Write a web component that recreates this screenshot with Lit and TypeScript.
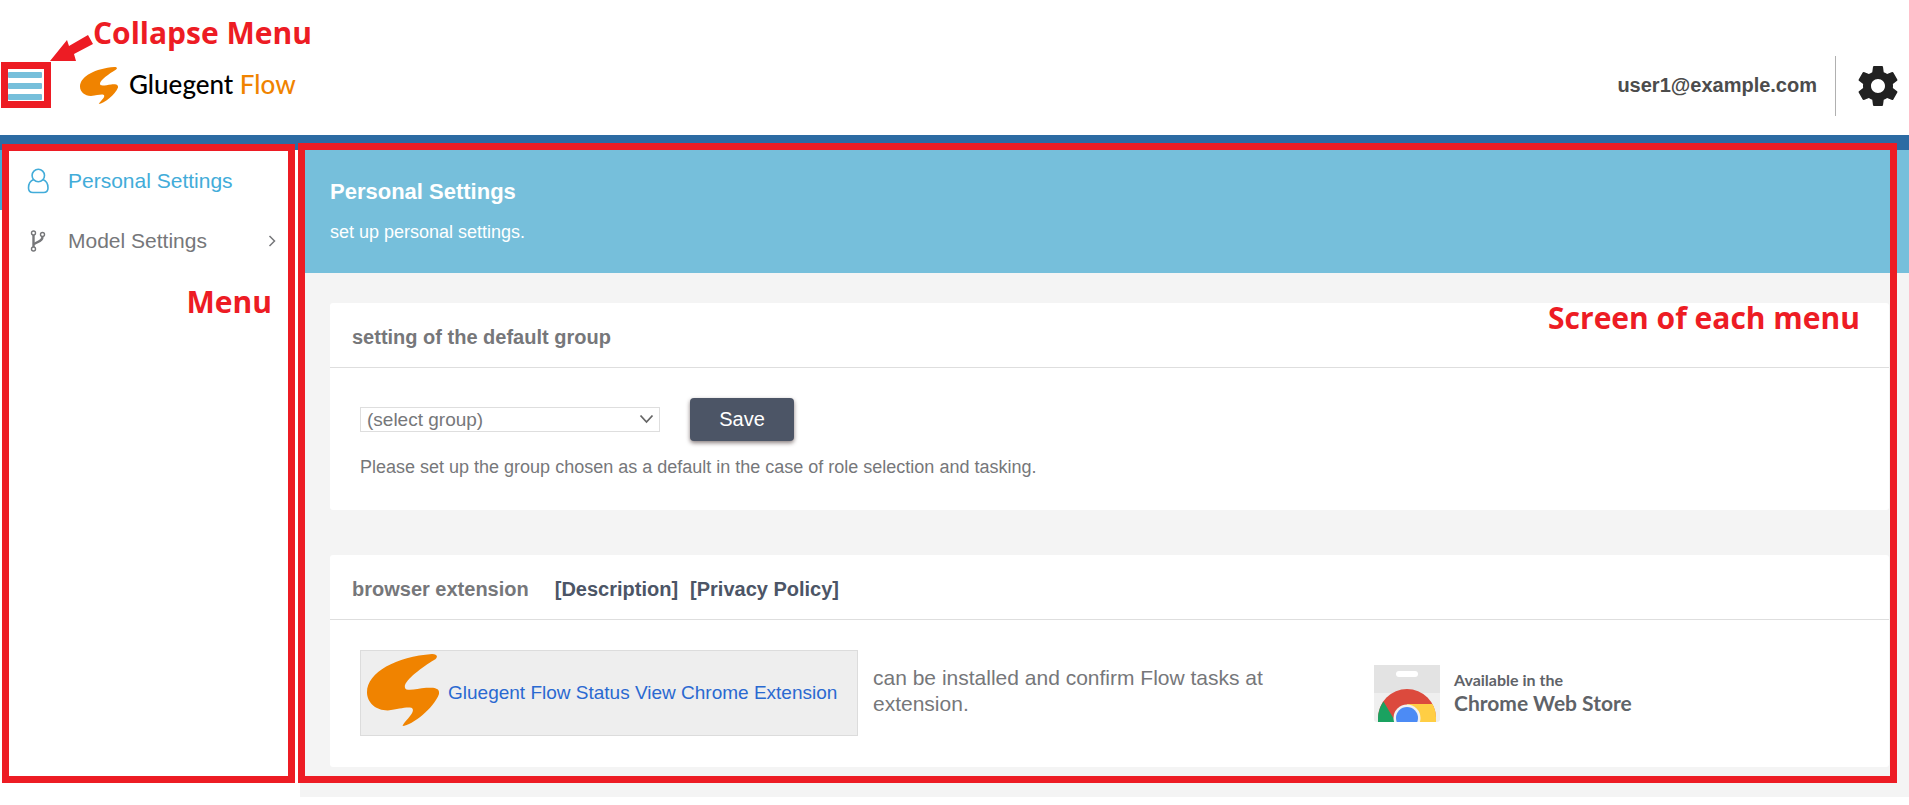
import { LitElement, html, css, svg } from "lit";
import { customElement, state } from "lit/decorators.js";

const SWOOSH =
  "M66 0C30 3 0 21 0 44C0 56 9 65 21 65C32 64 38 61 45 62C51 66 38 77 36 83C46 82 68 62 73 46C74 38 66 39 60 39C52 40 46 42 40 41C32 35 55 16 68 7C73 3 71 0 66 0Z";

@customElement("app-root")
export class AppRoot extends LitElement {
  @state() private collapsed = false;

  static styles = css`
    :host {
      display: block;
      font-family: "Liberation Sans", Arial, sans-serif;
      color: #76777a;
      background: #fff;
    }
    * {
      box-sizing: border-box;
    }
    a {
      text-decoration: none;
      color: inherit;
    }
    h1, h2, p, ul {
      margin: 0;
      padding: 0;
    }
    svg {
      display: block;
      flex: none;
    }
    button {
      font: inherit;
      border: 0;
      padding: 0;
      background: none;
      cursor: pointer;
    }

    .header {
      position: relative;
      display: flex;
      align-items: center;
      height: 150px;
      padding: 36px 7px 0 8px;
      border-bottom: 15px solid #2c6ba3;
    }
    .toggle {
      display: grid;
      gap: 5px;
      width: 34px;
    }
    .bar {
      height: 6px;
      border-radius: 1px;
      background: #76bfdb;
    }
    .brand {
      display: flex;
      align-items: center;
      gap: 11px;
      margin-left: 38px;
      font: 500 26px/32px Lato, "Open Sans", sans-serif;
      color: #000;
    }
    .brand-name {
      padding-bottom: 4px;
    }
    .brand-accent {
      color: #f08300;
    }
    .account {
      display: flex;
      align-items: center;
      margin-left: auto;
      font-size: 20px;
      font-weight: bold;
      color: #4c4c4c;
    }
    .user {
      padding-right: 18px;
    }
    .gear {
      border-left: 1px solid #b0b0b0;
      height: 60px;
      padding-left: 18px;
      color: #212121;
    }

    .page {
      display: grid;
      grid-template-columns: 300px minmax(0, 1fr);
    }
    .page.collapsed {
      grid-template-columns: 0 minmax(0, 1fr);
    }
    .menu {
      position: relative;
    }
    .collapsed .menu {
      visibility: hidden;
    }
    .menu ul {
      list-style: none;
    }
    .menu-link {
      display: grid;
      grid-template-columns: 24px 1fr auto;
      align-items: center;
      gap: 18px;
      height: 60px;
      padding: 1px 24px 0 24px;
      border-left: 2px solid transparent;
      font-size: 21px;
    }
    .menu-link.active {
      border-left-color: #42acd9;
      color: #42acd9;
    }

    .screen {
      position: relative;
      background: #f4f4f4;
      padding-bottom: 30px;
    }
    .hero {
      height: 123px;
      padding: 28px 30px;
      background: #76bfdb;
      color: #fff;
    }
    .hero h1 {
      font-size: 22px;
      line-height: 28px;
    }
    .hero p {
      margin-top: 12px;
      font-size: 18px;
      line-height: 28px;
    }
    .cards {
      display: grid;
      gap: 45px;
      padding: 30px 20px 0 30px;
    }
    .card {
      background: #fff;
      border-radius: 3px;
    }
    .card-head {
      display: flex;
      align-items: center;
      gap: 12px;
      height: 65px;
      padding: 4px 22px 0;
      border-bottom: 1px solid #dedede;
      font-size: 20px;
      font-weight: bold;
    }
    .card-head h2 {
      font-size: 20px;
      margin-right: 14px;
    }
    .card-head a {
      color: #4c5566;
    }
    .card-body {
      padding: 30px 30px 31px;
    }
    .form-row {
      display: flex;
      align-items: center;
      gap: 30px;
    }
    .select-box {
      position: relative;
      width: 300px;
    }
    .select-box select {
      display: block;
      appearance: none;
      width: 100%;
      height: 25px;
      padding: 0 24px 0 6px;
      border: 1px solid #dedede;
      border-radius: 0;
      background: #fff;
      color: #76777a;
      font: 19px/23px "Liberation Sans", Arial, sans-serif;
    }
    .select-arrow {
      position: absolute;
      right: 6px;
      top: 6px;
      pointer-events: none;
    }
    .save {
      width: 104px;
      height: 43px;
      border-radius: 4px;
      background: #4c5566;
      color: #fff;
      font-size: 20px;
      box-shadow: 0 2px 4px rgba(40, 20, 20, 0.55);
    }
    .hint {
      margin-top: 14px;
      font-size: 18px;
      line-height: 24px;
    }
    .extension {
      display: flex;
      align-items: center;
      gap: 15px;
    }
    .ext-link {
      display: flex;
      align-items: center;
      gap: 9px;
      height: 86px;
      flex: 0 0 498px;
      padding: 0 10px 6px 6px;
      border: 1px solid #dcdcdc;
      background: #eee;
      color: #2a69d1;
      font-size: 19px;
    }
    .ext-text {
      padding-top: 6px;
    }
    .ext-note {
      flex: 0 1 486px;
      padding: 0 40px 4px 0;
      font-size: 21px;
      line-height: 26px;
    }
    .store {
      display: flex;
      align-items: center;
      gap: 14px;
      font-family: Lato, sans-serif;
      font-weight: 700;
      color: #5f6368;
    }
    .store-top, .store-name {
      display: block;
      white-space: nowrap;
    }
    .store-top {
      font-size: 16px;
      line-height: 20px;
    }
    .store-name {
      font-size: 21px;
      line-height: 26px;
    }

    .frame {
      position: absolute;
      border: 7px solid #ed1c24;
      pointer-events: none;
    }
    .frame-toggle {
      left: 1px;
      top: 62px;
      width: 50px;
      height: 46px;
    }
    .frame-menu {
      inset: -6px 5px 14px 2px;
    }
    .frame-screen {
      inset: -7px 12px 14px -2px;
    }
    .note {
      position: absolute;
      font: bold 30px/40px "Open Sans", "Noto Sans", sans-serif;
      color: #ed1c24;
      white-space: nowrap;
      pointer-events: none;
    }
    .note-toggle {
      left: 93px;
      top: 13px;
    }
    .note-menu {
      right: 28px;
      top: 132px;
    }
    .note-screen {
      right: 49px;
      top: 148px;
    }
    .arrow {
      position: absolute;
      left: 50px;
      top: 33px;
      pointer-events: none;
    }
  `;

  private swoosh(width: number, height: number) {
    return html`<svg width=${width} height=${height} viewBox="0 0 73 83" preserveAspectRatio="none" aria-hidden="true">
      ${svg`<path d=${SWOOSH} fill="#f08300" />`}
    </svg>`;
  }

  render() {
    return html`
      <header class="header">
        <button class="toggle" type="button" aria-label="Collapse Menu" @click=${() => (this.collapsed = !this.collapsed)}>
          <span class="bar"></span><span class="bar"></span><span class="bar"></span>
        </button>
        <a class="brand" href="#">
          ${this.swoosh(38, 37)}
          <span class="brand-name">Gluegent <span class="brand-accent">Flow</span></span>
        </a>
        <div class="account">
          <span class="user">user1@example.com</span>
          <button class="gear" type="button" aria-label="Settings">
            <svg width="48" height="48" viewBox="0 0 24 24" fill="currentColor">
              <path d="M19.43 12.98c.04-.32.07-.64.07-.98s-.03-.66-.07-.98l2.11-1.65c.19-.15.24-.42.12-.64l-2-3.46c-.12-.22-.39-.3-.61-.22l-2.49 1c-.52-.4-1.08-.73-1.69-.98l-.38-2.65C14.46 2.18 14.25 2 14 2h-4c-.25 0-.46.18-.49.42l-.38 2.65c-.61.25-1.17.59-1.69.98l-2.49-1c-.23-.09-.49 0-.61.22l-2 3.46c-.13.22-.07.49.12.64l2.11 1.65c-.04.32-.07.65-.07.98s.03.66.07.98l-2.11 1.65c-.19.15-.24.42-.12.64l2 3.46c.12.22.39.3.61.22l2.49-1c.52.4 1.08.73 1.69.98l.38 2.65c.03.24.24.42.49.42h4c.25 0 .46-.18.49-.42l.38-2.65c.61-.25 1.17-.59 1.69-.98l2.49 1c.23.09.49 0 .61-.22l2-3.46c.12-.22.07-.49-.12-.64l-2.11-1.65zM12 15.5c-1.93 0-3.5-1.57-3.5-3.5s1.57-3.5 3.5-3.5 3.5 1.57 3.5 3.5-1.57 3.5-3.5 3.5z" />
            </svg>
          </button>
        </div>
        <div class="frame frame-toggle"></div>
        <svg class="arrow" width="44" height="28" viewBox="0 0 44 28" aria-hidden="true">
          <path d="M0 28L17 7L19 13L38 2L43 11L24 21L26 28Z" fill="#ed1c24" />
        </svg>
        <span class="note note-toggle">Collapse Menu</span>
      </header>

      <div class="page ${this.collapsed ? "collapsed" : ""}">
        <nav class="menu">
          <ul>
            <li>
              <a class="menu-link active" href="#personal">
                <svg width="24" height="26" viewBox="0 0 24 26" fill="none" stroke="currentColor" stroke-width="1.6">
                  <circle cx="12.3" cy="7.5" r="6.2" />
                  <path d="M7.6 11.600C4 13 2.500 16 2.500 20C2.500 23 4 24.500 7 24.500H17.500C20.500 24.500 22 23 22 20C22 16 20.500 13 17 11.600" />
                </svg>
                <span>Personal Settings</span>
              </a>
            </li>
            <li>
              <a class="menu-link" href="#model">
                <svg width="24" height="22" viewBox="0 0 24 22" fill="none" stroke="currentColor" stroke-width="1.400">
                  <circle cx="7.500" cy="3" r="2" />
                  <circle cx="16.500" cy="4.500" r="2" />
                  <circle cx="7.500" cy="19" r="2" />
                  <path d="M7.500 5V17" stroke-width="2.400" />
                  <path d="M16.500 6.500C16.500 13 9.500 11 7.800 14.500" stroke-width="2.400" />
                </svg>
                <span>Model Settings</span>
                <svg width="8" height="12" viewBox="0 0 8 12" fill="none" stroke="currentColor" stroke-width="1.500">
                  <path d="M1.500 1L6.500 6L1.500 11" />
                </svg>
              </a>
            </li>
          </ul>
          <div class="frame frame-menu"></div>
          <span class="note note-menu">Menu</span>
        </nav>

        <main class="screen">
          <div class="hero">
            <h1>Personal Settings</h1>
            <p>set up personal settings.</p>
          </div>
          <div class="cards">
            <section class="card">
              <div class="card-head"><h2>setting of the default group</h2></div>
              <div class="card-body">
                <div class="form-row">
                  <div class="select-box">
                    <select aria-label="default group">
                      <option>(select group)</option>
                    </select>
                    <svg class="select-arrow" width="15" height="12" viewBox="0 0 15 12" fill="none" stroke="#666" stroke-width="1.800">
                      <path d="M1.500 2.500L7.500 9L13.500 2.500" />
                    </svg>
                  </div>
                  <button class="save" type="button">Save</button>
                </div>
                <p class="hint">Please set up the group chosen as a default in the case of role selection and tasking.</p>
              </div>
            </section>
            <section class="card">
              <div class="card-head">
                <h2>browser extension</h2>
                <a href="#description">[Description]</a>
                <a href="#privacy">[Privacy Policy]</a>
              </div>
              <div class="card-body extension">
                <a class="ext-link" href="#extension">
                  ${this.swoosh(72, 72)}
                  <span class="ext-text">Gluegent Flow Status View Chrome Extension</span>
                </a>
                <p class="ext-note">can be installed and confirm Flow tasks at extension.</p>
                <a class="store" href="#store">
                  <svg width="66" height="57" viewBox="0 0 66 57" aria-hidden="true">
                    <defs>
                      <clipPath id="bag"><path d="M0 0H66V54Q66 57 63 57H3Q0 57 0 54Z" /></clipPath>
                    </defs>
                    <g clip-path="url(#bag)">
                      <rect width="66" height="57" fill="#efefef" />
                      <rect width="66" height="28" fill="#e3e3e3" />
                      <rect x="22" y="6" width="22" height="6" rx="3" fill="#fff" />
                      <circle cx="33" cy="53" r="29" fill="#dc4a3d" />
                      <path d="M9.500 36.500L24 61H4V53A29 29 0 0 1 9.500 36.500Z" fill="#1aa260" />
                      <path d="M33 39H58.500A29 29 0 0 1 62 53V61H38Z" fill="#ffce44" />
                      <circle cx="33" cy="53" r="13.500" fill="#f1f1f1" />
                      <circle cx="33" cy="53" r="11" fill="#4c8bf5" />
                    </g>
                  </svg>
                  <span>
                    <span class="store-top">Available in the</span>
                    <span class="store-name">Chrome Web Store</span>
                  </span>
                </a>
              </div>
            </section>
          </div>
          <div class="frame frame-screen"></div>
          <span class="note note-screen">Screen of each menu</span>
        </main>
      </div>
    `;
  }
}
